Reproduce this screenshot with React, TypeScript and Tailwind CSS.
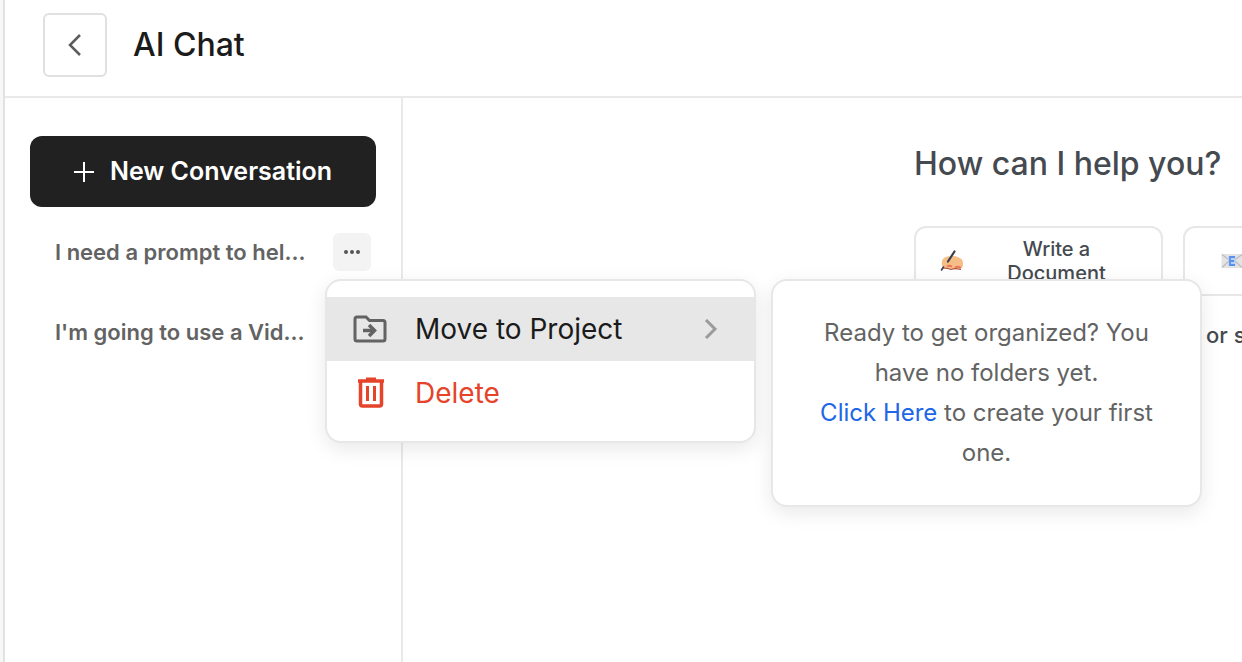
import React from 'react';

const conversations = [
  { id: 1, title: 'I need a prompt to hel...', menuOpen: true },
  { id: 2, title: "I'm going to use a Vid...", menuOpen: false },
];

const WritingHandIcon = () => (
  <svg width="24" height="22" viewBox="0 0 24 22" aria-hidden="true">
    <path d="M2 11Q3 7 8 6.500L13 6Q18 6 22 9.500Q24 14 22 18Q17 20 11 19L3 18Q1 14 2 11Z" fill="#f6be86" />
    <path d="M7 16.500Q9 15 12 16.500M15 17.500Q18 16 21 18" stroke="#e8775a" strokeWidth="2" fill="none" />
    <path d="M3 18L8 18.500L11 19.500L15 18.500L21 19.500" stroke="#a84a3a" strokeWidth="1.200" fill="none" />
    <path d="M8 11.500L14.500 1.500" stroke="#3b3f47" strokeWidth="2.200" strokeLinecap="round" />
    <path d="M3.500 17L1.500 20" stroke="#3b3f47" strokeWidth="1.600" strokeLinecap="round" />
  </svg>
);

const EmailIcon = () => (
  <svg width="22" height="16" viewBox="0 0 22 16" aria-hidden="true">
    <rect x="0.500" y="1" width="21" height="14" rx="1" fill="#e3e3e4" />
    <path d="M1 1.500L11 9L21 1.500M1 14.500L8 8M21 14.500L14 8" stroke="#bcbdc0" strokeWidth="1.200" fill="none" />
    <rect x="7.500" y="3" width="7" height="10" fill="#b9d0f7" />
    <path d="M14 4H9V12H14M9 8H13" stroke="#5b90ee" strokeWidth="1.800" fill="none" />
  </svg>
);

const MoveIcon = () => (
  <svg width="34" height="28" viewBox="0 0 34 28" fill="none" stroke="#636363" strokeWidth="3" aria-hidden="true">
    <path d="M2 4Q2 2 4 2H13L16.500 5.500H30Q32 5.500 32 7.500V24Q32 26 30 26H4Q2 26 2 24Z" />
    <path d="M10 15.500H20" strokeWidth="3.500" />
    <path d="M16 10L21.500 15.500L16 21" strokeWidth="3.500" />
  </svg>
);

const TrashIcon = () => (
  <svg width="28" height="32" viewBox="0 0 28 32" fill="none" stroke="#e5432a" aria-hidden="true">
    <path d="M3.500 4V27Q3.500 29 5.500 29H22.500Q24.500 29 24.500 27V4" strokeWidth="3.500" />
    <path d="M1 4H27" strokeWidth="3.500" />
    <path d="M9 2H19" strokeWidth="3" />
    <path d="M10.500 9V24M17.500 9V24" strokeWidth="3" />
  </svg>
);

const ConversationMenu: React.FC = () => (
  <div className="w-[431px] rounded-2xl border-2 border-[#e7e7e7] bg-white py-4 shadow-[0_6px_20px_rgba(0,0,0,0.09)]">
    <button type="button" className="flex h-16 w-full items-center bg-[#e7e7e7] pl-[26px] pr-9 text-[28px] text-[#1b1b1b]">
      <span className="flex w-[62px]">
        <MoveIcon />
      </span>
      Move to Project
      <svg className="ml-auto" width="14" height="20" viewBox="0 0 14 20" fill="none" stroke="#9b9b9b" strokeWidth="3" aria-hidden="true">
        <path d="M2 1L11 10L2 19" />
      </svg>
    </button>
    <button type="button" className="flex h-16 w-full items-center pl-[30px] text-[28px] text-[#e5432a]">
      <span className="flex w-[58px]">
        <TrashIcon />
      </span>
      Delete
    </button>

    <div className="absolute top-0 left-[446px] w-[431px] rounded-2xl border-2 border-[#e7e7e7] bg-white px-10 pt-8 pb-8 text-center text-[24px] leading-10 text-[#636363] shadow-[0_6px_20px_rgba(0,0,0,0.09)]">
      Ready to get organized? You have no folders yet.
      <br />
      <a href="#new-folder" className="text-[#2066e8]">Click Here</a> to create your first one.
    </div>
  </div>
);

const Sidebar: React.FC = () => (
  <aside className="relative z-10 w-[398px] shrink-0 border-r-2 border-[#e9e9e9] pt-[38px] pl-[25px] pr-[25px]">
    <button
      type="button"
      className="flex h-[71px] w-full items-center justify-center gap-4 rounded-xl bg-[#212121] text-[25px] font-semibold text-white"
    >
      <svg width="20" height="20" viewBox="0 0 20 20" stroke="currentColor" strokeWidth="2" aria-hidden="true">
        <path d="M10 0V20M0 10H20" />
      </svg>
      New Conversation
    </button>
    <ul className="mt-[5px]">
      {conversations.map((conversation) => (
        <li key={conversation.id} className="relative flex h-20 items-center justify-between pl-[25px] pr-[5px]">
          <a href="#conversation" className="text-[22px] font-semibold whitespace-nowrap text-[#636363]">
            {conversation.title}
          </a>
          {conversation.menuOpen && (
            <>
              <button
                type="button"
                aria-label="Conversation options"
                className="flex size-[38px] items-center justify-center rounded-md bg-[#f3f3f3]"
              >
                <svg width="16" height="4" viewBox="0 0 16 4" fill="#555555" aria-hidden="true">
                  <circle cx="2" cy="2" r="2" />
                  <circle cx="8" cy="2" r="2" />
                  <circle cx="14" cy="2" r="2" />
                </svg>
              </button>
              <div className="absolute top-[67px] left-[295px] z-10">
                <ConversationMenu />
              </div>
            </>
          )}
        </li>
      ))}
    </ul>
  </aside>
);

const App: React.FC = () => {
  return (
    <div className="flex min-h-screen overflow-hidden bg-white font-['Inter',sans-serif]">
      <div className="w-[5px] shrink-0 border-r-2 border-[#e2e2e2] bg-[#f7f7f7]" />
      <div className="flex min-w-0 flex-1 flex-col">
        <header className="flex h-[98px] items-center gap-[26px] border-b-2 border-[#e9e9e9] pb-[6px] pl-[38px]">
          <button
            type="button"
            aria-label="Back"
            className="flex size-16 items-center justify-center rounded-md border-2 border-[#e0e0e0]"
          >
            <svg width="14" height="22" viewBox="0 0 14 22" fill="none" stroke="#5c5c5c" strokeWidth="2.500" aria-hidden="true">
              <path d="M12 1L2 11L12 21" />
            </svg>
          </button>
          <h1 className="text-[32px] font-medium text-[#1b1b1b]">AI Chat</h1>
        </header>

        <div className="flex flex-1">
          <Sidebar />
          <main className="min-w-0 flex-1 overflow-hidden pt-[42px] pl-[511px]">
            <h2 className="text-[32px] leading-[48px] font-medium whitespace-nowrap text-[#454a50]">
              How can I help you?
            </h2>
            <div className="mt-[38px] flex gap-5">
              <button
                type="button"
                className="flex h-[70px] w-[249px] shrink-0 items-center rounded-xl border-2 border-[#e7e7e7] px-6 text-[20px] leading-6 font-medium text-[#454a50]"
              >
                <WritingHandIcon />
                <span className="flex-1 pl-9 pr-6">Write a Document</span>
              </button>
              <button
                type="button"
                aria-label="Email"
                className="flex h-[70px] w-[249px] shrink-0 items-center rounded-xl border-2 border-[#e7e7e7] pl-9"
              >
                <EmailIcon />
              </button>
            </div>
            <p className="mt-[23px] pl-[292px] text-[22px] leading-8 font-medium whitespace-nowrap text-[#454a50]">or s</p>
          </main>
        </div>
      </div>
    </div>
  );
};

export default App;
